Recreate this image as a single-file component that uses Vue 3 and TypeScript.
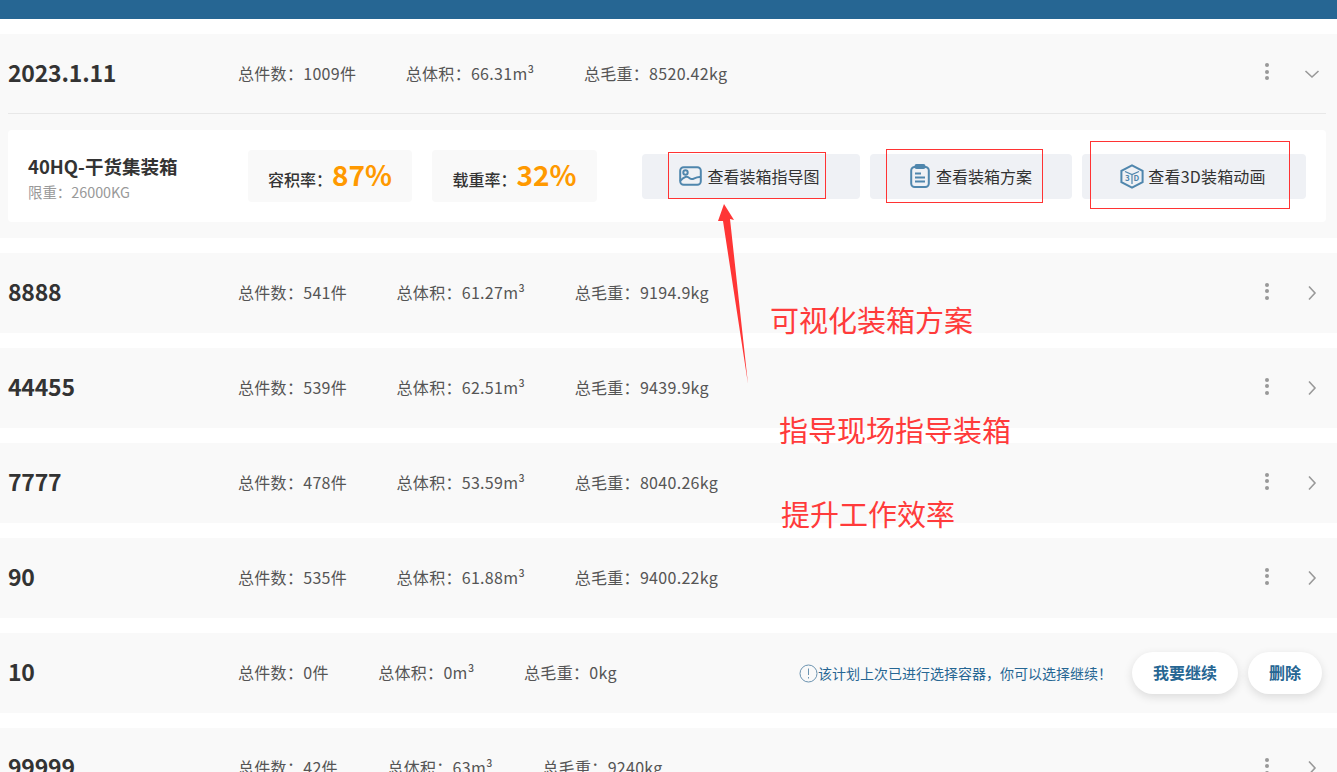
<script setup lang="ts">
interface Plan {
  name: string
  count: string
  volume: string
  weight: string
  resume?: boolean
}

const plans: Plan[] = [
  { name: '8888', count: '541', volume: '61.27', weight: '9194.9' },
  { name: '44455', count: '539', volume: '62.51', weight: '9439.9' },
  { name: '7777', count: '478', volume: '53.59', weight: '8040.26' },
  { name: '90', count: '535', volume: '61.88', weight: '9400.22' },
  { name: '10', count: '0', volume: '0', weight: '0', resume: true },
  { name: '99999', count: '42', volume: '63', weight: '9240' },
]
</script>

<template>
  <div class="page">
    <div class="topbar"></div>

    <section class="plan">
      <div class="plan-head divided">
        <div class="plan-name">2023.1.11</div>
        <div class="totals">
          <span>总件数：1009件</span>
          <span>总体积：66.31m³</span>
          <span>总毛重：8520.42kg</span>
        </div>
        <div class="actions">
          <span class="dots"><i></i><i></i><i></i></span>
          <svg class="chevron" width="16" height="16" viewBox="0 0 16 16">
            <path d="M1.5 5 L8 11 L14.5 5" />
          </svg>
        </div>
      </div>
      <div class="container-wrap">
        <div class="container-card">
          <div class="container-info">
            <div class="container-name">40HQ-干货集装箱</div>
            <div class="container-limit">限重：26000KG</div>
          </div>
          <div class="rate">容积率：<b>87%</b></div>
          <div class="rate second">载重率：<b>32%</b></div>
          <div class="buttons">
            <button class="view-btn first-btn">
              <svg width="23" height="20" viewBox="0 0 23 20" class="btn-icon">
                <rect x="1.2" y="1.2" width="20.6" height="17.6" rx="3.5" />
                <circle cx="6.5" cy="6.5" r="2.2" />
                <path d="M1.2 15 C5 10 8 10 11 12.5 C14 15 16 10 21.8 11" />
              </svg>
              查看装箱指导图
            </button>
            <button class="view-btn second-btn">
              <svg width="20" height="24" viewBox="0 0 20 24" class="btn-icon">
                <rect x="1.2" y="3" width="17.6" height="20" rx="3.5" />
                <rect x="5.5" y="1" width="9" height="3" rx="1" class="filled" />
                <path d="M5 9.5 H11 M5 13.5 H15 M5 17.5 H15" />
              </svg>
              查看装箱方案
            </button>
            <button class="view-btn third-btn">
              <svg width="24" height="25" viewBox="0 0 24 25" class="btn-icon">
                <path d="M12 1.4 L22.6 6.9 V18.1 L12 23.6 L1.4 18.1 V6.9 Z" />
                <path d="M5 7.5 L12 10.5 L19 7.5 M12 10.5 V20" class="thin" />
                <text x="5" y="17" class="cube-text">3</text>
                <text x="13.6" y="17" class="cube-text">D</text>
              </svg>
              查看3D装箱动画
            </button>
          </div>
        </div>
      </div>
    </section>

    <section v-for="plan in plans" :key="plan.name" class="plan">
      <div class="plan-head">
        <div class="plan-name">{{ plan.name }}</div>
        <div class="totals">
          <span>总件数：{{ plan.count }}件</span>
          <span>总体积：{{ plan.volume }}m³</span>
          <span>总毛重：{{ plan.weight }}kg</span>
        </div>
        <div v-if="plan.resume" class="resume">
          <svg width="19" height="19" viewBox="0 0 19 19" class="notice-icon">
            <circle cx="9.5" cy="9.5" r="8.5" />
            <path d="M9.5 4.5 V11 M9.5 13 V14.5" />
          </svg>
          <span class="notice">该计划上次已进行选择容器，你可以选择继续！</span>
          <button class="pill continue">我要继续</button>
          <button class="pill remove">删除</button>
        </div>
        <div v-else class="actions raised">
          <span class="dots"><i></i><i></i><i></i></span>
          <svg class="chevron" width="16" height="16" viewBox="0 0 16 16">
            <path d="M5 1.5 L11 8 L5 14.5" />
          </svg>
        </div>
      </div>
    </section>

    <!-- annotations pasted over the screenshot -->
    <div class="mark" style="left: 668px; top: 152px; width: 158px; height: 47px"></div>
    <div class="mark" style="left: 886px; top: 149px; width: 157px; height: 54px"></div>
    <div class="mark" style="left: 1090px; top: 141px; width: 200px; height: 68px"></div>
    <svg class="arrow" width="1337" height="772" viewBox="0 0 1337 772">
      <polygon points="724,204 734,220 730,219 748,384 723,221 718,221" />
    </svg>
    <div class="note" style="left: 770px; top: 298px">可视化装箱方案</div>
    <div class="note" style="left: 779px; top: 408px">指导现场指导装箱</div>
    <div class="note" style="left: 781px; top: 492px">提升工作效率</div>
  </div>
</template>

<style>
html,
body {
  margin: 0;
  height: 772px;
  overflow: hidden;
  background: #fff;
}
</style>

<style scoped>
.page {
  position: relative;
  height: 772px;
  overflow: hidden;
  font-family: "Noto Sans CJK SC", "Noto Sans", sans-serif;
  color: #333;
}

.topbar {
  height: 19px;
  margin-bottom: 15px;
  background: #266693;
}

.plan {
  margin-bottom: 15px;
  background: #f9f9f9;
}

.plan-head {
  display: flex;
  align-items: center;
  height: 80px;
  margin-left: 8px;
}

.plan-head.divided {
  box-sizing: border-box;
  margin-right: 11px;
  border-bottom: 1px solid #e8e8e8;
}

.plan-name {
  width: 230px;
  flex-shrink: 0;
  padding-bottom: 4px;
  font-size: 23px;
  font-weight: 700;
  letter-spacing: -0.2px;
  color: #333;
}

.totals {
  display: flex;
  gap: 49.5px;
  padding-bottom: 2px;
  font-size: 16px;
  letter-spacing: 0.3px;
  color: #555;
}

.actions {
  display: flex;
  align-items: center;
  margin-left: auto;
  padding-right: 17px;
}

.plan-head.divided .actions {
  padding-right: 6px;
}

.dots {
  display: flex;
  flex-direction: column;
  gap: 2.5px;
  margin-right: 35px;
  margin-top: -4px;
}

.dots i {
  display: block;
  width: 4px;
  height: 4px;
  border-radius: 50%;
  background: #999;
}

.chevron {
  fill: none;
  stroke: #999;
  stroke-width: 1.6;
}

.container-wrap {
  padding: 16px 11px 16px 8px;
}

.container-card {
  display: flex;
  align-items: center;
  height: 92px;
  padding-left: 20px;
  border-radius: 4px;
  background: #fff;
}

.container-info {
  width: 220px;
  flex-shrink: 0;
  padding-top: 3px;
}

.container-name {
  font-size: 18.5px;
  font-weight: 700;
  line-height: 26px;
}

.container-limit {
  padding-top: 2px;
  font-size: 14.4px;
  line-height: 22px;
  color: #999;
}

.rate {
  display: flex;
  align-items: baseline;
  justify-content: center;
  box-sizing: border-box;
  width: 164px;
  height: 52px;
  border-radius: 4px;
  background: #f9f9f9;
  font-size: 16px;
  font-weight: 500;
  line-height: 48px;
}

.rate.second {
  width: 165px;
  margin-left: 20px;
}

.rate b {
  font-size: 28px;
  font-weight: 700;
  color: #ff9900;
}

.buttons {
  display: flex;
  gap: 10px;
  margin-left: 45px;
}

.view-btn {
  display: flex;
  align-items: center;
  justify-content: center;
  gap: 6px;
  height: 45px;
  padding: 0;
  border: 0;
  border-radius: 4px;
  background: #eff1f5;
  font-family: inherit;
  font-size: 16px;
  color: #333;
}

.first-btn {
  width: 218px;
  gap: 5px;
  padding-right: 3px;
}

.second-btn {
  width: 202px;
}

.third-btn {
  width: 224px;
  gap: 4px;
  padding-right: 2px;
  letter-spacing: 0.2px;
}

.btn-icon {
  fill: none;
  stroke: #4f86ad;
  stroke-width: 2;
}

.btn-icon .filled {
  fill: #4f86ad;
}

.btn-icon .thin {
  stroke-width: 1.2;
}

.cube-text {
  font-size: 8px;
  font-weight: 700;
  fill: #4f86ad;
  stroke: none;
}

.resume {
  display: flex;
  align-items: center;
  margin-left: auto;
  padding-right: 15px;
}

.notice-icon {
  fill: none;
  stroke: #6b93b0;
  stroke-width: 1;
  flex-shrink: 0;
}

.notice {
  padding-bottom: 1px;
  font-size: 14px;
  color: #266693;
  margin-right: 20px;
}

.pill {
  height: 42px;
  padding: 0 0 3px;
  border: 0;
  border-radius: 21px;
  background: #fff;
  box-shadow: 0 3px 10px rgba(0, 0, 0, 0.12);
  font-family: inherit;
  font-size: 16px;
  font-weight: 700;
  color: #266693;
}

.continue {
  width: 106px;
  margin-right: 10px;
}

.remove {
  width: 74px;
}

.mark {
  position: absolute;
  box-sizing: border-box;
  border: 1px solid #f33;
}

.arrow {
  position: absolute;
  left: 0;
  top: 0;
  pointer-events: none;
}

.arrow polygon {
  fill: #ff3636;
}

.note {
  position: absolute;
  font-size: 29px;
  line-height: 42px;
  color: #ff3b3b;
  white-space: nowrap;
}
</style>
